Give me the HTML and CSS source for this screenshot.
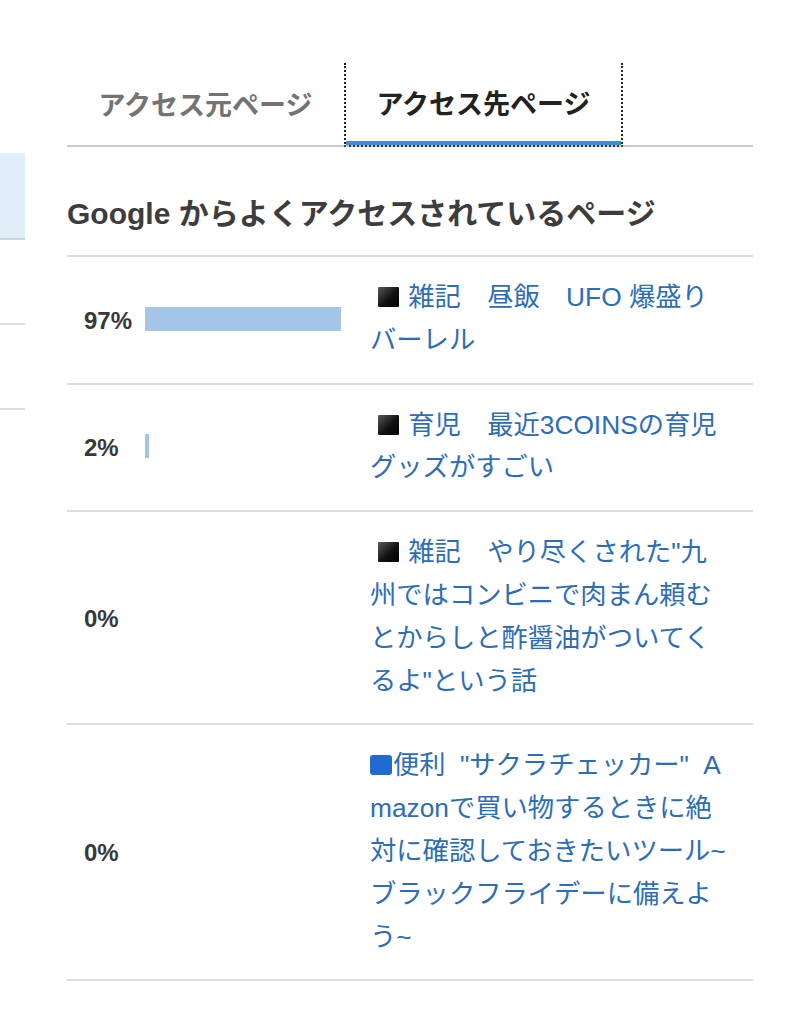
FILE: index.html
```html
<!DOCTYPE html>
<html lang="ja">
<head>
<meta charset="utf-8">
<title>アクセス先ページ</title>
<link rel="stylesheet" href="styles.css">
</head>
<body>
<div class="page">
  <aside class="side">
    <div class="side-box"></div>
    <div class="side-item"></div>
    <div class="side-item"></div>
  </aside>
  <main class="main">
    <div class="tabs">
      <div class="tab">アクセス元ページ</div>
      <div class="tab tab-active">アクセス先ページ</div>
    </div>
    <h2 class="heading">Google からよくアクセスされているページ</h2>
    <ul class="rows">
      <li class="row">
        <span class="pct">97%</span>
        <span class="track"><span class="bar" style="width:97%"></span></span>
        <a class="title" href="#"><span class="sq"></span> 雑記　昼飯　UFO 爆盛りバーレル</a>
      </li>
      <li class="row">
        <span class="pct">2%</span>
        <span class="track"><span class="bar" style="width:2%"></span></span>
        <a class="title" href="#"><span class="sq"></span> 育児　最近3COINSの育児グッズがすごい</a>
      </li>
      <li class="row">
        <span class="pct">0%</span>
        <span class="track"><span class="bar" style="width:0%"></span></span>
        <a class="title" href="#"><span class="sq"></span> 雑記　やり尽くされた"九州ではコンビニで肉まん頼むとからしと酢醤油がついてくるよ"という話</a>
      </li>
      <li class="row">
        <span class="pct">0%</span>
        <span class="track"><span class="bar" style="width:0%"></span></span>
        <a class="title title-spaced" href="#"><span class="sq sq-blue"></span>便利 "サクラチェッカー" Amazonで買い物するときに絶対に確認しておきたいツール~ブラックフライデーに備えよう~</a>
      </li>
    </ul>
  </main>
</div>
</body>
</html>
```
FILE: styles.css
```css
html, body {
  margin: 0;
  padding: 0;
  background: #ffffff;
}
body {
  font-family: "Liberation Sans", "Noto Sans CJK JP", sans-serif;
  color: #333333;
}
.page {
  display: flex;
  align-items: flex-start;
}
.side {
  width: 25px;
  flex: none;
  padding-top: 153px;
}
.side-box {
  height: 85px;
  background: #e2eef7;
  border-bottom: 2px solid #d2d6da;
}
.side-item {
  height: 83px;
  border-bottom: 2px solid #dddddd;
}
.main {
  width: 686px;
  margin-left: 42px;
  padding-top: 63px;
}
.tabs {
  display: flex;
  border-bottom: 2px solid #cccccc;
}
.tab {
  width: 277px;
  height: 84px;
  margin-bottom: -2px;
  box-sizing: border-box;
  display: flex;
  align-items: center;
  justify-content: center;
  padding-bottom: 4px;
  font-size: 27px;
  font-weight: bold;
  color: #737373;
  position: relative;
}
.tab-active {
  width: 279px;
  color: #222222;
  border-left: 2px dotted #222222;
  border-right: 2px dotted #222222;
  border-bottom: 2px dotted #333333;
}
.tab-active::after {
  content: "";
  position: absolute;
  left: 0;
  right: 0;
  bottom: 0;
  height: 4px;
  background: #3b8fd8;
}
.heading {
  margin: 0;
  padding: 47px 0 21px;
  font-size: 30px;
  line-height: 40px;
  font-weight: bold;
  color: #3d3d3d;
}
.rows {
  list-style: none;
  margin: 0;
  padding: 0;
  border-bottom: 2px solid #dddddd;
}
.row {
  display: grid;
  grid-template-columns: 78px 225px 359px;
  align-items: center;
  padding: 19px 0 21px;
  border-top: 2px solid #dddddd;
}
.pct {
  padding-left: 17px;
  padding-top: 4px;
  font-size: 24px;
  font-weight: bold;
  color: #383838;
}
.track {
  display: flex;
  width: 202px;
  height: 24px;
}
.bar {
  display: block;
  height: 24px;
  background: #a5c5e7;
}
.title {
  font-size: 26.3px;
  line-height: 42.8px;
  color: #2d6db5;
  text-decoration: none;
  word-break: break-all;
}
.title-spaced {
  word-spacing: 7px;
}
.sq {
  display: inline-block;
  width: 21px;
  height: 20px;
  margin-left: 8px;
  margin-right: 2px;
  vertical-align: -1px;
  background: linear-gradient(135deg, #5a5a5a 0%, #111111 55%, #000000 100%);
  border-radius: 1px;
}
.sq-blue {
  margin-left: 0;
  margin-right: 1px;
  width: 22px;
  height: 20px;
  background: #1f6bd0;
  border-radius: 3px;
}
```
